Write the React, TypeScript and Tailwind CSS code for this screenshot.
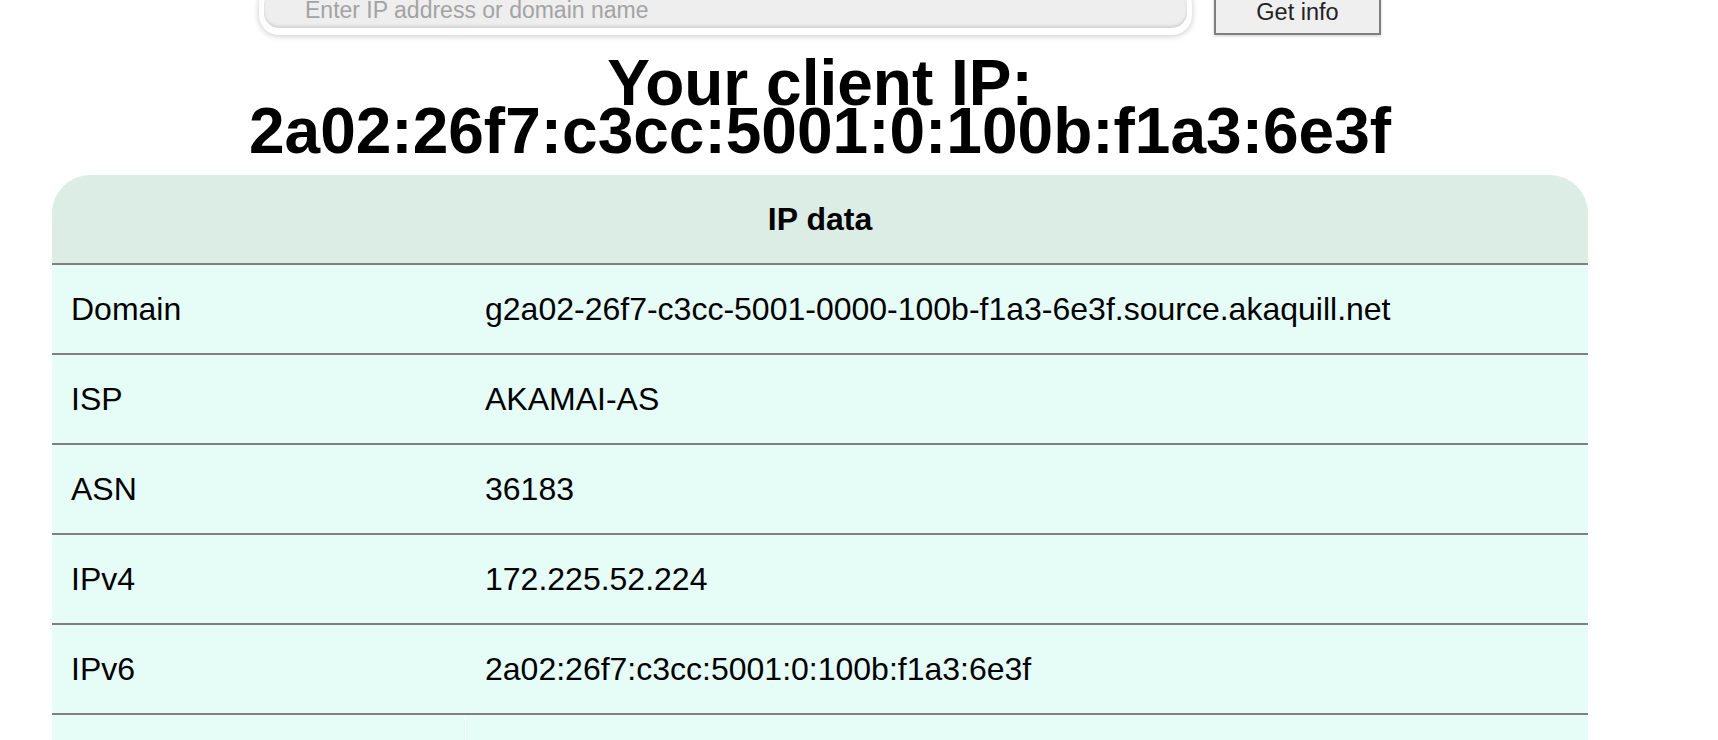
import { useState } from 'react';

const rows = [
  { label: 'Domain', value: 'g2a02-26f7-c3cc-5001-0000-100b-f1a3-6e3f.source.akaquill.net' },
  { label: 'ISP', value: 'AKAMAI-AS' },
  { label: 'ASN', value: '36183' },
  { label: 'IPv4', value: '172.225.52.224' },
  { label: 'IPv6', value: '2a02:26f7:c3cc:5001:0:100b:f1a3:6e3f' },
  { label: 'Country', value: 'Netherlands' },
];

export default function App() {
  const [query, setQuery] = useState('');

  return (
    <div className="min-h-screen overflow-hidden bg-white text-black font-['Liberation_Sans',Arial,sans-serif]">
      <div className="w-[1640px]">
        <form
          className="flex justify-center gap-[22px] h-[50px] -mt-[15px]"
          onSubmit={(e) => e.preventDefault()}
        >
          <div className="w-[933px] rounded-[20px] bg-white pt-[5px] px-[5px] pb-[7px] shadow-[0_1px_6px_rgba(0,0,0,0.22)]">
            <input
              value={query}
              onChange={(e) => setQuery(e.target.value)}
              placeholder="Enter IP address or domain name"
              className="w-full h-full rounded-[15px] bg-[#eeeeee] pl-[41px] pt-[3px] text-[23px] text-[#222] placeholder:text-[#a3a3a3] outline-none shadow-[inset_0_-2px_3px_rgba(0,0,0,0.12)] font-['Liberation_Sans',Arial,sans-serif]"
            />
          </div>
          <button
            type="submit"
            className="w-[167px] pt-[5px] border-2 border-[#808080] bg-[#efefef] text-[23.5px] text-[#222] shadow-[0_1px_3px_rgba(0,0,0,0.2)] font-['Liberation_Sans',Arial,sans-serif]"
          >
            Get info
          </button>
        </form>

        <h1 className="mt-[24px] text-center text-[64px] font-bold leading-[48px]">
          Your client IP:
          <br />
          2a02:26f7:c3cc:5001:0:100b:f1a3:6e3f
        </h1>

        <div className="mt-[20px] mx-auto w-[1536px]">
          <div className="h-[90px] flex items-center justify-center rounded-t-[38px] bg-[#dcede6] border-b-2 border-[#808080] text-[32px] font-bold">
            IP data
          </div>
          {rows.map((row, i) => (
            <div
              key={row.label}
              className="flex h-[90px] bg-[#e6fcf7] border-b-2 border-[#808080] text-[32px]"
            >
              <div
                className={
                  i === rows.length - 1
                    ? 'w-[414px] flex items-center pl-[19px] border-r border-[#f6fffd]'
                    : 'w-[414px] flex items-center pl-[19px]'
                }
              >
                {row.label}
              </div>
              <div className="flex-1 flex items-center pl-[19px]">{row.value}</div>
            </div>
          ))}
        </div>
      </div>
    </div>
  );
}
